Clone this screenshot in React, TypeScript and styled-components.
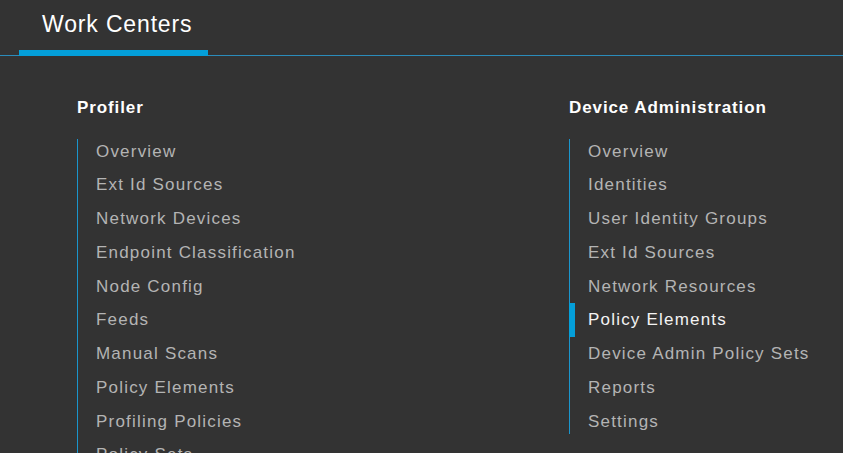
import React from "react";
import styled, { createGlobalStyle } from "styled-components";

const Global = createGlobalStyle`
  html, body { margin: 0; padding: 0; background: #333333; }
  body { font-family: "Liberation Sans", Arial, sans-serif; overflow: hidden; }
  * { box-sizing: border-box; }
`;

const Page = styled.div`
  width: 843px;
  height: 453px;
  background: #333333;
  overflow: hidden;
`;

const Header = styled.div`
  height: 56px;
  display: flex;
  align-items: flex-end;
  border-bottom: 1px solid #2b8cbb;
`;

const Tab = styled.div`
  margin-left: 19px;
  margin-bottom: -1px;
  width: 189px;
  height: 56px;
  padding: 11px 0 0 23px;
  border-bottom: 6px solid #049fd9;
  color: #ffffff;
  font-size: 23px;
  letter-spacing: 0.85px;
  line-height: 26px;
  white-space: nowrap;
`;

const Columns = styled.div`
  display: grid;
  grid-template-columns: 492px 1fr;
  padding: 41.5px 0 0 77px;
`;

const Column = styled.section`
  display: flex;
  flex-direction: column;
`;

const Heading = styled.h3`
  margin: 0;
  height: 20px;
  color: #ffffff;
  font-size: 17px;
  letter-spacing: 0.9px;
  line-height: 20px;
  font-weight: 700;
  white-space: nowrap;
`;

const List = styled.ul`
  list-style: none;
  margin: 21px 0 0 0;
  padding: 0;
  border-left: 1px solid #1a95cc;
  display: flex;
  flex-direction: column;
  gap: 8.75px;
`;

const Item = styled.li<{ $active?: boolean }>`
  position: relative;
  height: 25px;
  padding-left: 18px;
  color: ${(p) => (p.$active ? "#f4f4f4" : "#b4b4b4")};
  font-size: 17px;
  letter-spacing: 1.2px;
  line-height: 25px;
  white-space: nowrap;

  &::before {
    content: "";
    display: ${(p) => (p.$active ? "block" : "none")};
    position: absolute;
    left: -1px;
    top: -4.5px;
    bottom: -4.5px;
    width: 6px;
    background: #049fd9;
  }
`;

const profiler = [
  "Overview",
  "Ext Id Sources",
  "Network Devices",
  "Endpoint Classification",
  "Node Config",
  "Feeds",
  "Manual Scans",
  "Policy Elements",
  "Profiling Policies",
  "Policy Sets",
];

const deviceAdmin = [
  "Overview",
  "Identities",
  "User Identity Groups",
  "Ext Id Sources",
  "Network Resources",
  "Policy Elements",
  "Device Admin Policy Sets",
  "Reports",
  "Settings",
];

export default function App() {
  return (
    <Page>
      <Global />
      <Header>
        <Tab>Work Centers</Tab>
      </Header>
      <Columns>
        <Column>
          <Heading>Profiler</Heading>
          <List>
            {profiler.map((t) => (
              <Item key={t}>{t}</Item>
            ))}
          </List>
        </Column>
        <Column>
          <Heading>Device Administration</Heading>
          <List>
            {deviceAdmin.map((t) => (
              <Item key={t} $active={t === "Policy Elements"}>
                {t}
              </Item>
            ))}
          </List>
        </Column>
      </Columns>
    </Page>
  );
}
